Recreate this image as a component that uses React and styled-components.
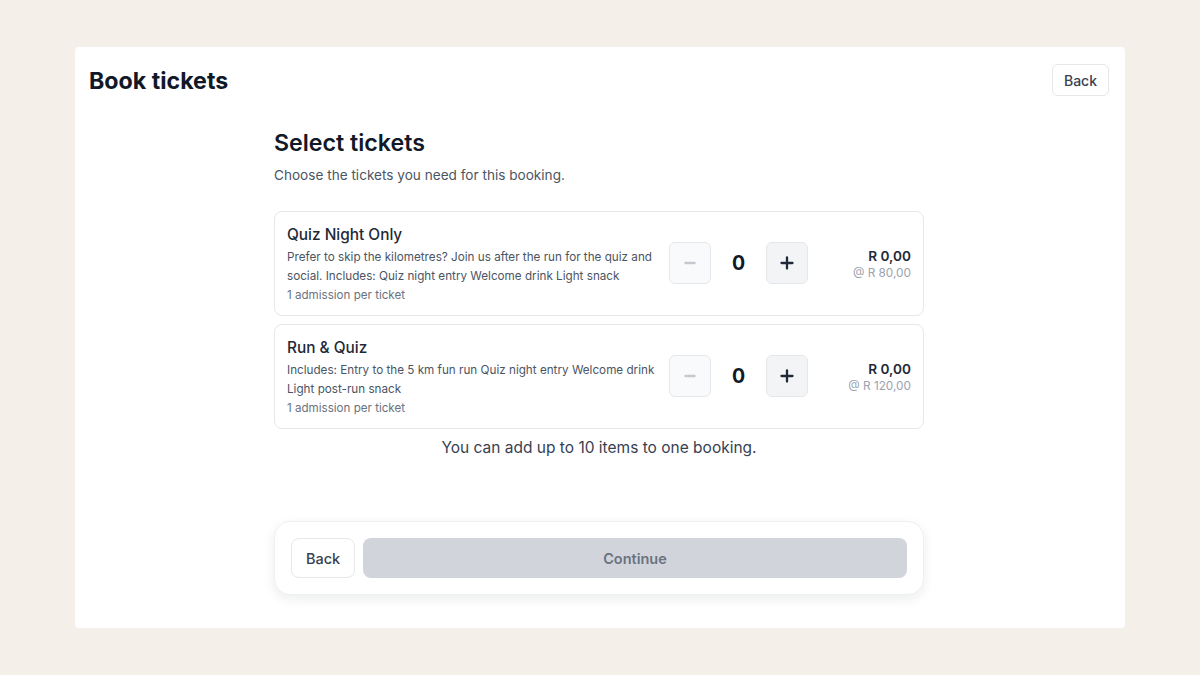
import React from "react";
import styled, { createGlobalStyle } from "styled-components";

const GlobalStyle = createGlobalStyle`
  * { box-sizing: border-box; }
  body {
    margin: 0;
    background: #f4efe8;
    font-family: "Inter", "Noto Sans", sans-serif;
    color: #111827;
  }
`;

const Page = styled.div`
  padding: 47px 75px;
`;

const Card = styled.div`
  background: #fff;
  border-radius: 4px;
  padding: 17px 16px 33px 14px;
`;

const Header = styled.header`
  display: flex;
  align-items: center;
  justify-content: space-between;
  height: 32px;
`;

const PageTitle = styled.h1`
  margin: 0;
  padding-top: 2px;
  font-size: 23.2px;
  font-weight: 700;
  color: #111827;
`;

const OutlineButton = styled.button`
  font-family: inherit;
  background: #fff;
  border: 1px solid #e5e7eb;
  border-radius: ${p => (p.$large ? "8px" : "6px")};
  height: ${p => (p.$large ? "40px" : "32px")};
  width: ${p => (p.$large ? "64px" : "57px")};
  padding: 0;
  font-size: ${p => (p.$large ? "14.5px" : "14px")};
  font-weight: 500;
  color: #374151;
  cursor: pointer;
`;

const Content = styled.main`
  width: 650px;
  margin: 31px auto 0;
`;

const SectionTitle = styled.h2`
  margin: 0;
  font-size: 23.2px;
  line-height: 32px;
  font-weight: 600;
  color: #111827;
`;

const Lead = styled.p`
  margin: 6px 0 0;
  font-size: 13.6px;
  line-height: 20px;
  color: #4b5563;
`;

const TicketList = styled.div`
  display: flex;
  flex-direction: column;
  gap: 8px;
  margin-top: 26px;
`;

const Ticket = styled.div`
  display: flex;
  align-items: center;
  border: 1px solid #e5e7eb;
  border-radius: 8px;
  padding: 11px 12px 11px;
`;

const TicketInfo = styled.div`
  flex: 1;
  min-width: 0;
  padding-right: 12px;
`;

const TicketName = styled.div`
  font-size: 15.4px;
  line-height: 24px;
  font-weight: 500;
  color: #1f2937;
`;

const TicketDesc = styled.div`
  margin-top: 1px;
  font-size: 11.7px;
  line-height: 19px;
  color: #4b5563;
`;

const TicketMeta = styled.div`
  font-size: 11.6px;
  line-height: 18px;
  color: #6b7280;
`;

const Stepper = styled.div`
  display: flex;
  align-items: center;
  margin-top: -1px;
`;

const StepButton = styled.button`
  width: 42px;
  height: 42px;
  display: flex;
  align-items: center;
  justify-content: center;
  border: 1px solid #e5e7eb;
  border-radius: 6px;
  background: ${p => (p.disabled ? "#f9fafb" : "#f3f4f6")};
  color: ${p => (p.disabled ? "#c4c8cf" : "#1f2937")};
  padding: 0;
  cursor: ${p => (p.disabled ? "default" : "pointer")};
`;

const Count = styled.div`
  width: 55px;
  text-align: center;
  font-size: 19.5px;
  font-weight: 700;
  color: #111827;
`;

const Price = styled.div`
  width: 103px;
  text-align: right;
`;

const Total = styled.div`
  font-size: 13.6px;
  line-height: 18px;
  font-weight: 600;
  color: #1f2937;
`;

const Unit = styled.div`
  font-size: 11.8px;
  line-height: 16px;
  color: #9ca3af;
`;

const Note = styled.p`
  margin: 7px 0 0;
  text-align: center;
  font-size: 15.5px;
  line-height: 24px;
  color: #374151;
`;

const Footer = styled.div`
  display: flex;
  gap: 8px;
  margin-top: 61px;
  padding: 16px;
  background: #fff;
  border: 1px solid #eef0f2;
  border-radius: 16px;
  box-shadow: 0 4px 12px rgba(17, 24, 39, 0.08);
`;

const ContinueButton = styled.button`
  flex: 1;
  height: 40px;
  font-family: inherit;
  font-size: 14.5px;
  font-weight: 600;
  color: #6b7280;
  background: #d1d5db;
  border: none;
  border-radius: 8px;
`;

const Minus = () => (
  <svg width="14" height="14" viewBox="0 0 14 14">
    <path d="M2.5 7h9" stroke="currentColor" strokeWidth="2.4" strokeLinecap="round" />
  </svg>
);

const Plus = () => (
  <svg width="16" height="16" viewBox="0 0 16 16">
    <path d="M2.5 8h11M8 2.5v11" stroke="currentColor" strokeWidth="2.3" strokeLinecap="round" />
  </svg>
);

const tickets = [
  {
    name: "Quiz Night Only",
    desc: "Prefer to skip the kilometres? Join us after the run for the quiz and social. Includes: Quiz night entry Welcome drink Light snack",
    price: "R 80,00"
  },
  {
    name: "Run & Quiz",
    desc: "Includes: Entry to the 5 km fun run Quiz night entry Welcome drink Light post-run snack",
    price: "R 120,00"
  }
];

export default function App() {
  return (
    <Page>
      <GlobalStyle />
      <Card>
        <Header>
          <PageTitle>Book tickets</PageTitle>
          <OutlineButton>Back</OutlineButton>
        </Header>
        <Content>
          <SectionTitle>Select tickets</SectionTitle>
          <Lead>Choose the tickets you need for this booking.</Lead>
          <TicketList>
            {tickets.map(t => (
              <Ticket key={t.name}>
                <TicketInfo>
                  <TicketName>{t.name}</TicketName>
                  <TicketDesc>{t.desc}</TicketDesc>
                  <TicketMeta>1 admission per ticket</TicketMeta>
                </TicketInfo>
                <Stepper>
                  <StepButton disabled aria-label="Remove ticket">
                    <Minus />
                  </StepButton>
                  <Count>0</Count>
                  <StepButton aria-label="Add ticket">
                    <Plus />
                  </StepButton>
                </Stepper>
                <Price>
                  <Total>R 0,00</Total>
                  <Unit>@ {t.price}</Unit>
                </Price>
              </Ticket>
            ))}
          </TicketList>
          <Note>You can add up to 10 items to one booking.</Note>
          <Footer>
            <OutlineButton $large>Back</OutlineButton>
            <ContinueButton disabled>Continue</ContinueButton>
          </Footer>
        </Content>
      </Card>
    </Page>
  );
}
